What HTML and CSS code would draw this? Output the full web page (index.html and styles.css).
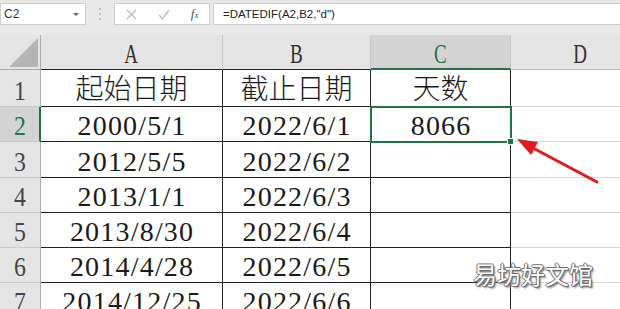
FILE: index.html
```html
<!DOCTYPE html>
<html lang="zh-CN">
<head>
    <meta charset="UTF-8">
    <meta name="viewport" content="width=device-width, initial-scale=1.0">
    <title>DATEDIF</title>
    <link rel="stylesheet" href="styles.css">
</head>
<body>
    <div class="toolbar">
        <div class="namebox"><span>C2</span><i class="caret"></i></div>
        <div class="dots"><b></b><b></b><b></b></div>
        <div class="fxbox">
            <svg width="11" height="11" viewBox="0 0 11 11"><path d="M1 1L10 10M10 1L1 10" stroke="#b9b9b9" stroke-width="1.3" fill="none"/></svg>
            <svg width="12" height="11" viewBox="0 0 12 11"><path d="M1 6L4.5 10L11 1" stroke="#b9b9b9" stroke-width="1.3" fill="none"/></svg>
            <span class="fx">f<small>x</small></span>
        </div>
        <div class="formula">=DATEDIF(A2,B2,"d")</div>
    </div>

    <div class="sheet">
        <div class="corner"><i class="tri"></i></div>
        <div class="hd"><span>A</span></div>
        <div class="hd"><span>B</span></div>
        <div class="hd sel"><span>C</span></div>
        <div class="hd ext-hd"><span>D</span></div>

        <div class="rh"><span>1</span></div>
        <div class="cell zh">起始日期</div>
        <div class="cell zh">截止日期</div>
        <div class="cell zh">天数</div>
        <div class="ext"></div>

        <div class="rh sel"><span>2</span></div>
        <div class="cell">2000/5/1</div>
        <div class="cell">2022/6/1</div>
        <div class="cell active">8066</div>
        <div class="ext"></div>

        <div class="rh"><span>3</span></div>
        <div class="cell">2012/5/5</div>
        <div class="cell">2022/6/2</div>
        <div class="cell"></div>
        <div class="ext"></div>

        <div class="rh"><span>4</span></div>
        <div class="cell">2013/1/1</div>
        <div class="cell">2022/6/3</div>
        <div class="cell"></div>
        <div class="ext"></div>

        <div class="rh"><span>5</span></div>
        <div class="cell">2013/8/30</div>
        <div class="cell">2022/6/4</div>
        <div class="cell"></div>
        <div class="ext"></div>

        <div class="rh"><span>6</span></div>
        <div class="cell">2014/4/28</div>
        <div class="cell">2022/6/5</div>
        <div class="cell"></div>
        <div class="ext"></div>

        <div class="rh"><span>7</span></div>
        <div class="cell">2014/12/25</div>
        <div class="cell">2022/6/6</div>
        <div class="cell"></div>
        <div class="ext"></div>
    </div>

    <!-- annotation arrow pointing at the result -->
    <svg class="arrow" width="620" height="309" viewBox="0 0 620 309">
        <line x1="597" y1="182" x2="533" y2="148" stroke="#e01b1b" stroke-width="3" stroke-linecap="round"/>
        <polygon points="517,139 538,142 531,155" fill="#e01b1b"/>
    </svg>

    <div class="mark">易坊好文馆</div>
</body>
</html>
```

FILE: styles.css
```css
body {
    margin: 0;
    width: 620px;
    height: 309px;
    overflow: hidden;
    position: relative;
    background: #fff;
    font-family: "Liberation Serif", "Noto Sans CJK SC", serif;
}

/* formula bar */
.toolbar {
    display: flex;
    align-items: flex-start;
    height: 35px;
    box-sizing: border-box;
    padding-top: 3px;
    background: #e8e8e8;
}
.namebox {
    width: 86px;
    height: 22px;
    box-sizing: border-box;
    background: #fff;
    border: 1px solid #cdcdcd;
    display: flex;
    align-items: center;
    justify-content: space-between;
    padding: 0 6px 0 3px;
    font: 12px "Liberation Sans", sans-serif;
    color: #333;
}
.caret {
    width: 0;
    height: 0;
    border-left: 3px solid transparent;
    border-right: 3px solid transparent;
    border-top: 3px solid #666;
}
.dots {
    width: 28px;
    height: 22px;
    display: flex;
    flex-direction: column;
    align-items: center;
    justify-content: center;
    gap: 3px;
}
.dots b {
    width: 2px;
    height: 2px;
    background: #c2c2c2;
}
.fxbox {
    width: 96px;
    height: 22px;
    box-sizing: border-box;
    background: #fff;
    border: 1px solid #cdcdcd;
    display: flex;
    align-items: center;
    justify-content: space-around;
}
.fx {
    font: italic 13px "Liberation Serif", serif;
    color: #555;
}
.fx small {
    font-size: 9px;
}
.formula {
    flex: 1;
    height: 22px;
    margin-left: 3px;
    box-sizing: border-box;
    background: #fff;
    border: 1px solid #cdcdcd;
    border-right: 0;
    padding-left: 9px;
    font: 11.5px/20px "Liberation Sans", sans-serif;
    color: #222;
}

/* grid */
.sheet {
    display: grid;
    width: 649px;
    grid-template-columns: 41px 182px 148px 140px 138px;
    grid-template-rows: 35px 37px 35px 36px 35px 35px 35px 35px;
}
.sheet > div {
    box-sizing: border-box;
    display: flex;
    align-items: flex-end;
    justify-content: center;
}
.corner {
    background: #e4e4e4;
    border-right: 1px solid #ababab;
    border-bottom: 1px solid #ababab;
    justify-content: flex-end !important;
    padding: 0 2px 2px 0;
}
.tri {
    width: 29px;
    height: 29px;
    background: #b4b4b4;
    clip-path: polygon(100% 0, 100% 100%, 0 100%);
}
.hd {
    background: #e4e4e4;
    border-right: 1px solid #c8c8c8;
    border-bottom: 1px solid #222;
    color: #333;
    font-size: 28px;
    line-height: 28px;
    padding-bottom: 1px;
}
.hd span {
    display: inline-block;
    transform: scaleX(0.68);
}
.hd.sel {
    background: #d3d3d3;
    color: #217346;
    border-bottom: 2px solid #217346;
    padding-bottom: 0;
}
.hd.ext-hd {
    border-right: 0;
    border-bottom-color: #bdbdbd;
}
.rh {
    background: #e4e4e4;
    border-right: 1px solid #ababab;
    border-bottom: 1px solid #c8c8c8;
    color: #444;
    font-size: 28px;
    line-height: 28px;
    padding-bottom: 1px;
}
.rh span {
    display: inline-block;
    transform: scaleX(0.85);
}
.rh.sel {
    background: #d3d3d3;
    color: #217346;
    border-right: 2px solid #217346;
}
.cell {
    border-right: 1px solid #222;
    border-bottom: 1px solid #222;
    font-size: 28px;
    line-height: 28px;
    letter-spacing: 1.2px;
    padding: 0 0 1px 1.2px;
    color: #1a1a1a;
    white-space: nowrap;
}
.cell.zh {
    letter-spacing: 0;
    padding-left: 0;
    font-weight: 300;
    padding-bottom: 2px;
}
.cell.active {
    position: relative;
    z-index: 1;
    outline: 2px solid #217346;
    outline-offset: -1px;
}
.cell.active::after {
    content: "";
    position: absolute;
    right: -4px;
    bottom: -4px;
    width: 5px;
    height: 5px;
    background: #217346;
    border: 1px solid #fff;
}
.ext {
    border-bottom: 1px solid #d6d6d6;
}

/* overlays */
.arrow {
    position: absolute;
    left: 0;
    top: 0;
    pointer-events: none;
}
.mark {
    position: absolute;
    left: 473px;
    top: 259px;
    font: 24px/30px "Noto Sans CJK SC", sans-serif;
    color: #fff;
    text-shadow: 1px 0 #6f6f6f, -1px 0 #6f6f6f, 0 1px #6f6f6f, 0 -1px #6f6f6f, 1px 1px #666, 2px 2px 2px #888;
}
```
